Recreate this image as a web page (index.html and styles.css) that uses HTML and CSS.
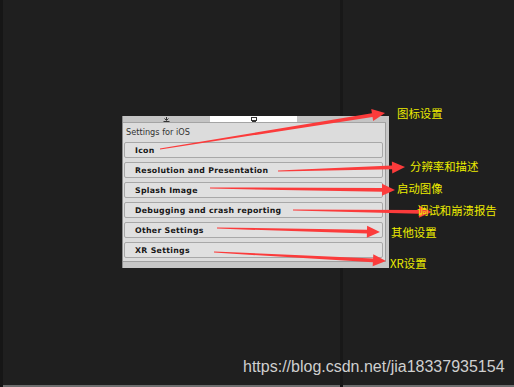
FILE: index.html
```html
<!DOCTYPE html>
<html>
<head>
<meta charset="utf-8">
<link rel="stylesheet" href="styles.css">
</head>
<body>
<div class="stage">
  <div class="panel">
    <div class="tabs">
      <span class="tab-left">
        <svg class="ico" width="7" height="5" viewBox="0 0 7 5"><path d="M3.5 0v3M1.5 1.5l2 2 2-2M0.5 4.5h6" stroke="#333" stroke-width="1" fill="none"/></svg>
      </span>
      <span class="tab-active">
        <svg class="ico" width="6" height="5" viewBox="0 0 6 5"><rect x="0.5" y="0.5" width="5" height="3" fill="none" stroke="#333"/><path d="M1 4.5h4" stroke="#333"/></svg>
      </span>
      <span class="tab-right"></span>
    </div>
    <div class="content">
      <div class="heading">Settings for iOS</div>
      <div class="sections">
        <div class="section">Icon</div>
        <div class="section">Resolution and Presentation</div>
        <div class="section">Splash Image</div>
        <div class="section">Debugging and crash reporting</div>
        <div class="section">Other Settings</div>
        <div class="section">XR Settings</div>
      </div>
    </div>
    <div class="footer"></div>
  </div>
</div>

<svg class="arrows" width="514" height="387" viewBox="0 0 514 387">
  <g fill="#fb3b3b">
    <g transform="translate(160 149) rotate(-9.09)"><polygon points="0,-0.6 214.9,-1.9 214.9,-6 227.9,0 214.9,6 214.9,1.9 0,0.6"/></g>
    <g transform="translate(278 171) rotate(-1.8)"><polygon points="0,-0.6 114.1,-1.9 114.1,-6 127.1,0 114.1,6 114.1,1.9 0,0.6"/></g>
    <g transform="translate(210 188) rotate(0.62)"><polygon points="0,-0.6 172,-1.9 172,-6 185,0 172,6 172,1.9 0,0.6"/></g>
    <g transform="translate(293 210) rotate(0.82)"><polygon points="0,-0.6 126,-1.9 126,-6 139,0 126,6 126,1.9 0,0.6"/></g>
    <g transform="translate(217 228) rotate(1.41)"><polygon points="0,-0.6 150,-1.9 150,-6 163,0 150,6 150,1.9 0,0.6"/></g>
    <g transform="translate(214 252) rotate(3.0)"><polygon points="0,-0.6 159.2,-1.9 159.2,-6 172.2,0 159.2,6 159.2,1.9 0,0.6"/></g>
  </g>
</svg>

<div class="label l1">图标设置</div>
<div class="label l2">分辨率和描述</div>
<div class="label l3">启动图像</div>
<div class="label l4">调试和崩溃报告</div>
<div class="label l5">其他设置</div>
<div class="label l6">XR设置</div>

<div class="watermark">https://blog.csdn.net/jia18337935154</div>
</body>
</html>
```

FILE: styles.css
```css
html, body {
  margin: 0;
  padding: 0;
}
body {
  width: 514px;
  height: 387px;
  overflow: hidden;
  position: relative;
  background:
    linear-gradient(to right, #161616 0 3px, transparent 3px),
    linear-gradient(to right, transparent 340px, #181818 340px 343px, transparent 343px),
    linear-gradient(to bottom, transparent 385px, #6e6e6e 385px),
    #1f1f1f;
  font-family: "DejaVu Sans", sans-serif;
}
.stage {
  padding: 116px 0 0 122px;
}
.panel {
  width: 267px;
  box-sizing: border-box;
  display: flex;
  flex-direction: column;
  border-left: 1px solid #8c8c8c;
  border-right: 3px solid #c6c6c6;
  background: #dcdcdc;
}
.tabs {
  height: 6px;
  display: flex;
  border-bottom: 1px solid #a4a4a4;
  background: #c4c4c4;
}
.tab-left {
  width: 87px;
  display: flex;
  justify-content: center;
  align-items: flex-end;
}
.tab-active {
  width: 87px;
  background: #ffffff;
  display: flex;
  justify-content: center;
  align-items: flex-end;
}
.tab-right {
  flex: 1;
}
.ico { display: block; }
.content {
  border-right: 1px solid #9c9c9c;
  padding: 3px 2px 3px 1px;
}
.heading {
  font-size: 8.2px;
  line-height: 12px;
  color: #333;
  padding-left: 2px;
  margin-bottom: 4px;
}
.sections {
  display: flex;
  flex-direction: column;
  gap: 4px;
}
.section {
  height: 16px;
  box-sizing: border-box;
  border: 1px solid #a8a8a8;
  border-radius: 2px;
  background: #e0e0e0;
  padding-left: 10px;
  font-size: 7.8px;
  font-weight: bold;
  letter-spacing: 0.3px;
  line-height: 15px;
  color: #161616;
}
.footer {
  height: 6px;
  border-top: 1px solid #a0a0a0;
  background: #c6c6c6;
}
.arrows {
  position: absolute;
  left: 0;
  top: 0;
}
.label {
  position: absolute;
  font-family: "Noto Sans CJK SC", sans-serif;
  font-size: 11.4px;
  line-height: 14px;
  color: #ecec00;
  white-space: nowrap;
}
.l1 { left: 397px; top: 106px; }
.l2 { left: 410px; top: 159px; }
.l3 { left: 397px; top: 181px; }
.l4 { left: 417px; top: 203px; }
.l5 { left: 391px; top: 225px; }
.l6 { left: 390px; top: 256px; }
.watermark {
  position: absolute;
  left: 243px;
  top: 357px;
  font-family: "Liberation Sans", Arial, sans-serif;
  font-size: 16px;
  line-height: 20px;
  color: #cfcfcf;
}
```
